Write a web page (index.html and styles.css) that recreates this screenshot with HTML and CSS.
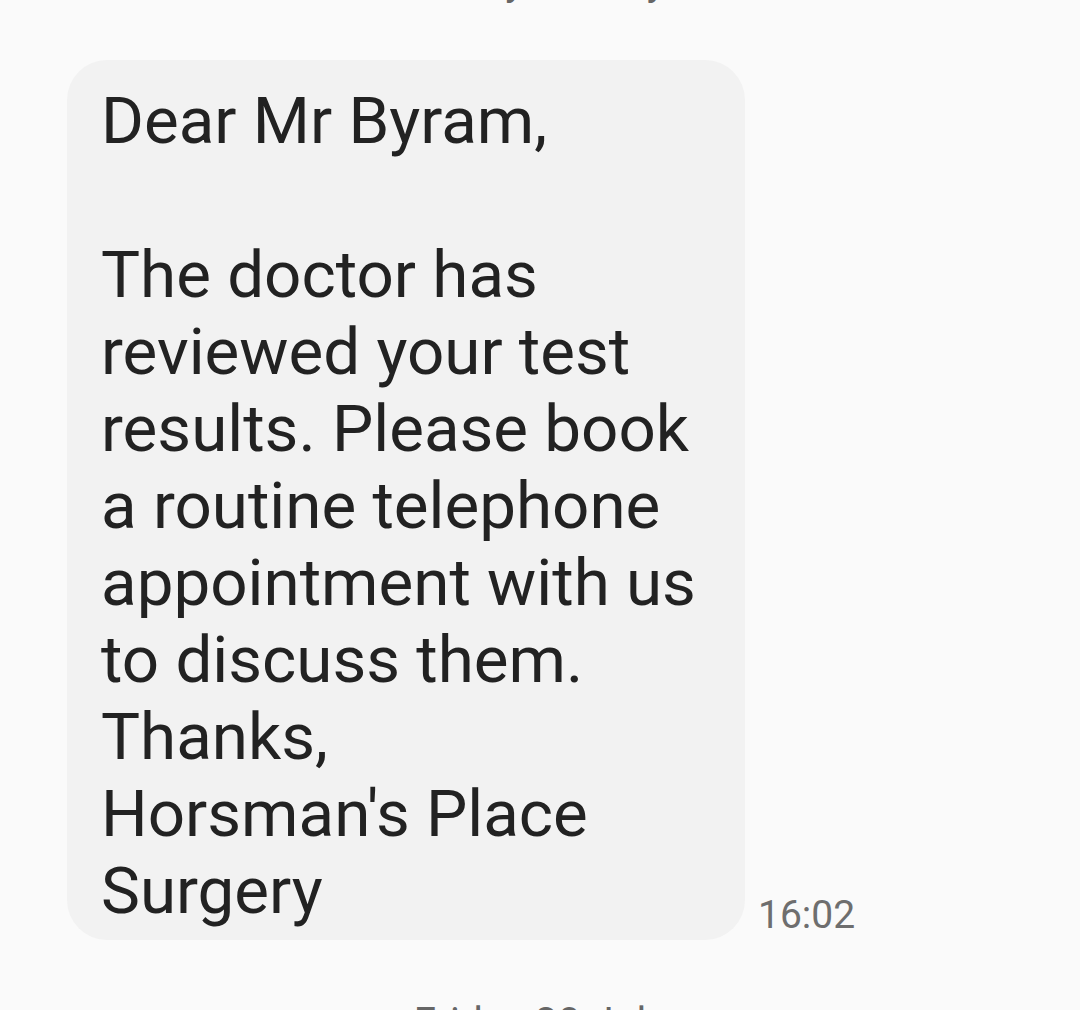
FILE: index.html
```html
<!DOCTYPE html>
<html lang="en-GB">
<head>
    <meta charset="UTF-8">
    <meta name="viewport" content="width=device-width, initial-scale=1.0">
    <title>Messages</title>
    <link rel="stylesheet" href="styles.css">
</head>
<body>
    <div class="conversation">
        <div class="day-divider day-divider-top">Friday 23 July</div>

        <div class="message-row">
            <div class="bubble">Dear Mr Byram,

The doctor has reviewed your test results. Please book a routine telephone appointment with us to discuss them.
Thanks,
Horsman's Place Surgery</div>
            <span class="time">16:02</span>
        </div>

        <div class="day-divider">Friday 30 July</div>
    </div>
</body>
</html>
```

FILE: styles.css
```css
body {
    margin: 0;
    background-color: #fafafa;
    font-family: Roboto, 'Noto Sans', Arial, sans-serif;
    color: #222;
    overflow: hidden;
}

.conversation {
    display: flex;
    flex-direction: column;
}

.day-divider {
    text-align: center;
    color: #666;
    font-size: 40px;
    line-height: 48px;
    letter-spacing: 0.5px;
}

/* the previous day's label is scrolled almost out of view */
.day-divider-top {
    margin-top: -42px;
    margin-bottom: 54px;
}

.message-row {
    display: flex;
    align-items: flex-end;
    padding-left: 67px;
    margin-bottom: 59px;
}

.bubble {
    width: 610px;
    background-color: #f2f2f2;
    border-radius: 40px;
    padding: 22px 34px 11px 34px;
    font-size: 65.5px;
    line-height: 77px;
    white-space: pre-line;
    color: #222;
}

.time {
    margin-left: 13px;
    margin-bottom: 1px;
    font-size: 39px;
    line-height: 48px;
    color: #6e6e6e;
}
```
